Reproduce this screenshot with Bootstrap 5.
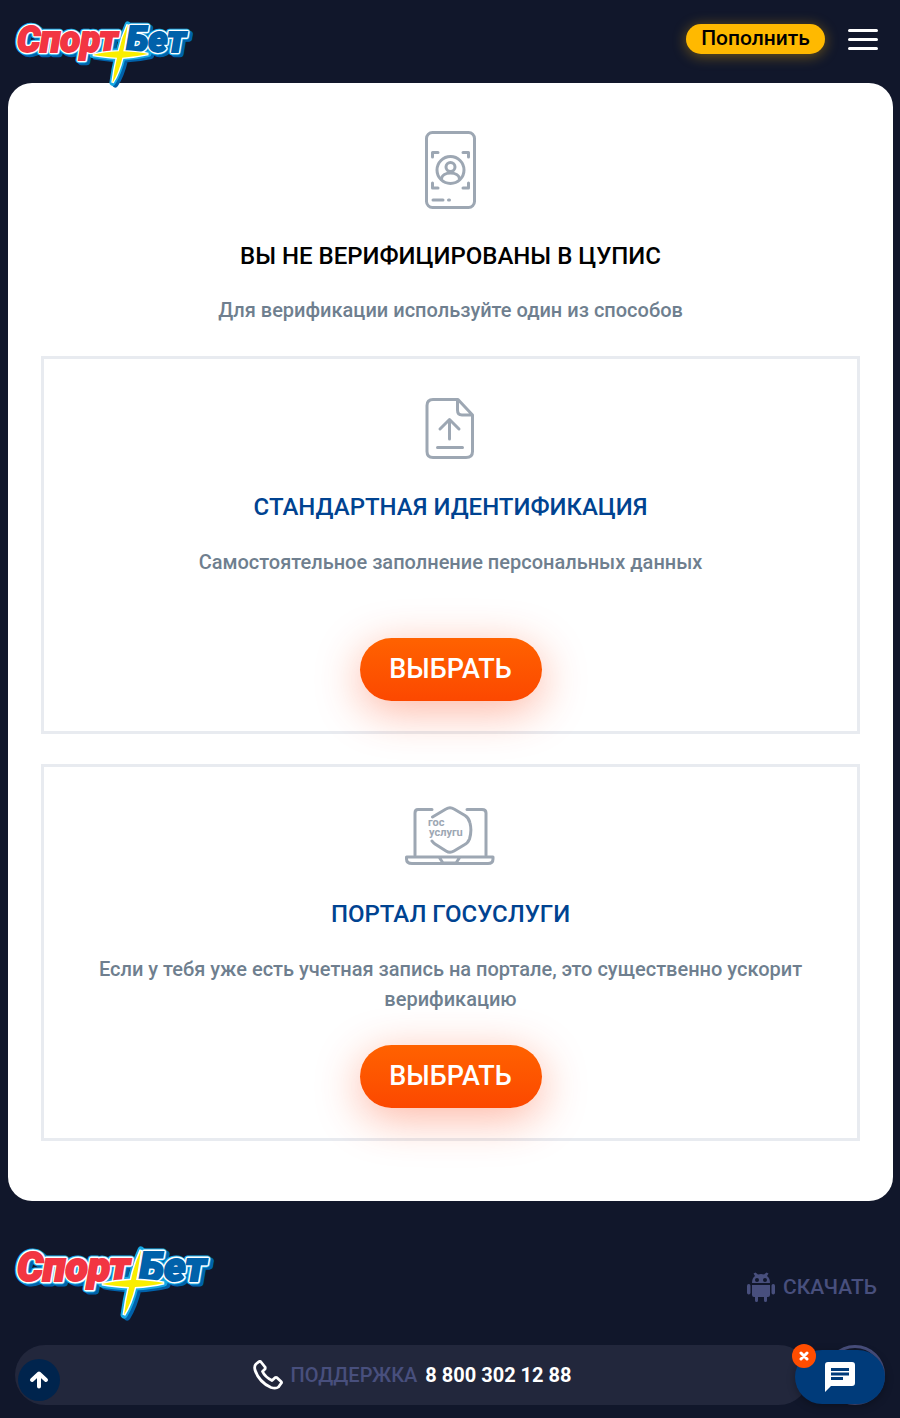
<!DOCTYPE html>
<html lang="ru">
<head>
<meta charset="utf-8">
<meta name="viewport" content="width=device-width, initial-scale=1">
<title>СпортБет — верификация</title>
<link href="https://cdn.jsdelivr.net/npm/bootstrap@5.3.0/dist/css/bootstrap.min.css" rel="stylesheet">
<style>
body{background:#11172b;font-family:Roboto,"Liberation Sans",sans-serif;font-weight:500;font-size:20px;line-height:30px;color:#6f7f8f}
a{text-decoration:none}
.site-header{height:83px;padding:21px 15px 0}
.brand-link{position:relative;z-index:2;line-height:0}
.brand-link svg{overflow:visible}
.logo-word{font-family:Roboto,sans-serif;font-weight:900;font-style:italic;font-size:41px}
.deposit-btn{height:30px;width:139px;padding:0 0 2px;border:0;border-radius:15px;background:#ffb900;color:#000;font-size:21px;line-height:28px;font-weight:500;box-shadow:0 2px 14px rgba(255,185,0,.4);margin-top:3px}
.menu-btn{width:32px;height:24px;margin:6px 6px 0 22px;padding:0;border:0;background:none;display:flex;align-items:center;justify-content:center}
.panel{background:#fff;border-radius:24px;margin:0 7px 0 8px;padding:48px 33px 60px}
.panel h1{font-size:24px;line-height:30px;font-weight:500;margin:32px 0 24px;color:#000}
.panel h2{font-size:24px;line-height:30px;font-weight:500;margin:33px 0 25px;color:#004391}
.panel p{margin:0 0 31px}
.line-icon{display:block;margin:0 auto;fill:none;stroke:#9da7b3;stroke-width:3;stroke-linecap:round;stroke-linejoin:round}
.method{border:3px solid #e8ebf0;padding:39px 50px 30px}
.method + .method{margin-top:30px}
.method p{min-height:60px}
.choose-btn{width:182px;height:63px;padding:0 0 2px;border:0;border-radius:32px;color:#fff;font-size:27px;font-weight:500;background:linear-gradient(#ff6200,#fc4800);box-shadow:0 10px 45px rgba(252,60,10,.38)}
.footer{padding:45px 15px 13px}
.download{color:#484f7d;font-size:21px;padding:6px 8px 0 0}
.support{height:60px;border-radius:30px;background:#22273c;color:#484f7d}
.support:hover{color:#484f7d}
.support b{color:#fff;font-weight:700}
.ring-btn{width:60px;height:60px;border:3px solid #484f7d;border-radius:50%;background:none}
.up-btn{position:fixed;left:18px;bottom:17px;width:42px;height:42px;border:0;border-radius:50%;background:#00244d;padding:0;display:flex;align-items:center;justify-content:center}
.chat{position:fixed;right:15px;bottom:14px}
.chat-btn{width:90px;height:54px;border:0;border-radius:27px;background:#003b7a;padding:0;display:flex;align-items:center;justify-content:center;box-shadow:0 2px 8px rgba(0,0,0,.3)}
.close-btn{position:absolute;left:-3px;top:-6px;width:24px;height:24px;border:0;border-radius:50%;background:#ff4d00;padding:0;display:flex;align-items:center;justify-content:center}
</style>
</head>
<body>
<svg width="0" height="0" class="position-absolute" aria-hidden="true">
  <defs>
    <g id="word">
      <text class="logo-word" x="2" y="35">Спорт</text>
      <text class="logo-word" x="124" y="35">Бет</text>
    </g>
    <path id="star" d="M126 4Q123 25 121 34Q139 35 149 37Q136 40 120 41Q116 58 109 69Q111 54 114 41Q98 40 87 38Q99 35 116 34Q119 19 126 4Z"/>
    <symbol id="logo" viewBox="0 0 200 75" overflow="visible">
      <g fill="#0061aa" stroke="#0061aa" stroke-width="7" stroke-linejoin="round" transform="translate(3 2)"><use href="#word"/><use href="#star"/></g>
      <g fill="#16a9e4" stroke="#16a9e4" stroke-width="7" stroke-linejoin="round"><use href="#word"/><use href="#star"/></g>
      <g fill="#fff" stroke="#fff" stroke-width="5" stroke-linejoin="round"><use href="#word"/></g>
      <text class="logo-word" x="2" y="35" fill="#f23542" stroke="#f23542" stroke-width="2">Спорт</text>
      <text class="logo-word" x="124" y="35" fill="#0061aa" stroke="#0061aa" stroke-width="2">Бет</text>
      <use href="#star" fill="#f9ee00" stroke="#fff" stroke-width="3" paint-order="stroke"/>
    </symbol>
  </defs>
</svg>

<header class="site-header d-flex align-items-start">
  <a href="#" class="brand-link me-auto" aria-label="СпортБет"><svg width="179" height="67"><use href="#logo"/></svg></a>
  <button type="button" class="deposit-btn">Пополнить</button>
  <button type="button" class="menu-btn" aria-label="Меню"><svg width="32" height="24" stroke="#fff" stroke-width="3" stroke-linecap="round"><path d="M2.500 3.500H29.500M2.500 12.500H29.500M2.500 21.500H29.500"/></svg></button>
</header>

<main class="panel text-center">
  <svg class="line-icon" width="51" height="78" viewBox="0 0 51 78"><rect x="1.500" y="1.500" width="48" height="75" rx="6"/><path d="M7.500 26V21.500H13M38 21.500H43.500V26M7.500 52V57H13M38 57H43.500V52M8 69H18M23.500 69H24.500"/><circle cx="25.500" cy="39" r="13.500"/><circle cx="25.500" cy="36" r="4.500"/><path d="M16.500 48C17 40 34 40 34.500 48"/></svg>
  <h1>ВЫ НЕ ВЕРИФИЦИРОВАНЫ В ЦУПИС</h1>
  <p>Для верификации используйте один из способов</p>

  <section class="method">
    <svg class="line-icon" width="51" height="61" viewBox="0 0 51 61"><path d="M33 1.500H8Q2 1.500 2 7.500V53.500Q2 59.500 8 59.500H41Q47.500 59.500 47.500 53.500V17L33 1.500ZM32.500 2V12Q32.500 17 37 17H47M24.500 41V21.500M15 31L24.500 21.500L34 31M12.500 49.500H37.500"/></svg>
    <h2>СТАНДАРТНАЯ ИДЕНТИФИКАЦИЯ</h2>
    <p>Самостоятельное заполнение персональных данных</p>
    <button type="button" class="choose-btn">ВЫБРАТЬ</button>
  </section>

  <section class="method">
    <svg class="line-icon" width="92" height="60" viewBox="0 0 92 60"><path d="M10 49V7Q10 3.500 13 3.500H27M62 3.500H77Q81 3.500 81 7V49M1.500 51H88V53Q88 57.500 83 57.500H7Q1.500 57.500 1.500 53ZM34 51L38 57H51L55 51M27.500 11L41 3Q45 .500 49 3L60 9.500Q64 12 65 17Q67 25 64.500 33Q63 37 59 39L49 45Q45 47.500 41 45L30 38Q28 36.500 27 35"/><text fill="#9da7b3" stroke="none" font-family="Roboto, sans-serif" font-size="11" font-weight="700"><tspan x="23" y="20">гос</tspan><tspan x="24" y="30">услугu</tspan></text></svg>
    <h2>ПОРТАЛ ГОСУСЛУГИ</h2>
    <p>Если у тебя уже есть учетная запись на портале, это существенно ускорит верификацию</p>
    <button type="button" class="choose-btn">ВЫБРАТЬ</button>
  </section>
</main>

<footer class="footer">
  <div class="d-flex align-items-center justify-content-between mb-4">
    <a href="#" class="brand-link" aria-label="СпортБет"><svg width="200" height="75"><use href="#logo"/></svg></a>
    <a href="#" class="download d-flex align-items-center gap-2"><svg width="28" height="30" viewBox="0 0 28 30" fill="#484f7d"><path d="M5 11Q5 6 8 4L6.500 1.500L8.500 .500L11 2.500Q14 1.500 17 2.500L19.500 .500L21.500 1.500L20 4Q23 6 23 11ZM10 6A2 2 0 1 0 10 10A2 2 0 1 0 10 6M18 6A2 2 0 1 0 18 10A2 2 0 1 0 18 6" fill-rule="evenodd"/><path d="M5 13H23V23Q23 25 21 25H20V28.500Q20 30 18.500 30T17 28.500V25H11V28.500Q11 30 9.500 30T8 28.500V25H7Q5 25 5 23Z"/><rect y="12" width="3.500" height="10.500" rx="1.700"/><rect x="24.500" y="12" width="3.500" height="10.500" rx="1.700"/></svg>СКАЧАТЬ</a>
  </div>
  <div class="d-flex">
    <a href="tel:88003021288" class="support flex-grow-1 d-flex align-items-center justify-content-center gap-2"><svg width="30" height="30" viewBox="0 0 30 30" fill="none" stroke="#fff" stroke-width="2.800" stroke-linejoin="round"><path d="M3 4L6 1.700Q7 1 8 2L12 7Q12.500 8 12 9L9.500 11.500Q12 17 19 20.500L22 17.700Q23 17 24 17.700L28 21.500Q29 22.500 28 23.500L25.500 27Q23 29 18 27.500Q6 22 2 10Q1 6 3 4Z"/></svg><span>ПОДДЕРЖКА</span><b>8 800 302 12 88</b></a>
    <button type="button" class="ring-btn ms-3" aria-label="Ещё"></button>
  </div>
</footer>

<button type="button" class="up-btn" aria-label="Наверх"><svg width="20" height="20" viewBox="0 0 20 20" fill="none" stroke="#fff" stroke-width="4" stroke-linecap="round" stroke-linejoin="round"><path d="M10 16.500V4M3 10L10 3.500L17 10"/></svg></button>
<div class="chat">
  <button type="button" class="chat-btn" aria-label="Чат"><svg width="30" height="30" viewBox="0 0 30 30"><path fill="#fff" d="M3 0H27Q30 0 30 3V21Q30 24 27 24H6L0 30V3Q0 0 3 0Z"/><path stroke="#003b7a" stroke-width="3" d="M6 7.500H24M6 12H24M6 16.500H18"/></svg></button>
  <button type="button" class="close-btn" aria-label="Закрыть"><svg width="10" height="10" stroke="#fff" stroke-width="3" stroke-linecap="round"><path d="M2 2L8 8M8 2L2 8"/></svg></button>
</div>
<script src="https://cdn.jsdelivr.net/npm/bootstrap@5.3.0/dist/js/bootstrap.bundle.min.js"></script>
</body>
</html>
